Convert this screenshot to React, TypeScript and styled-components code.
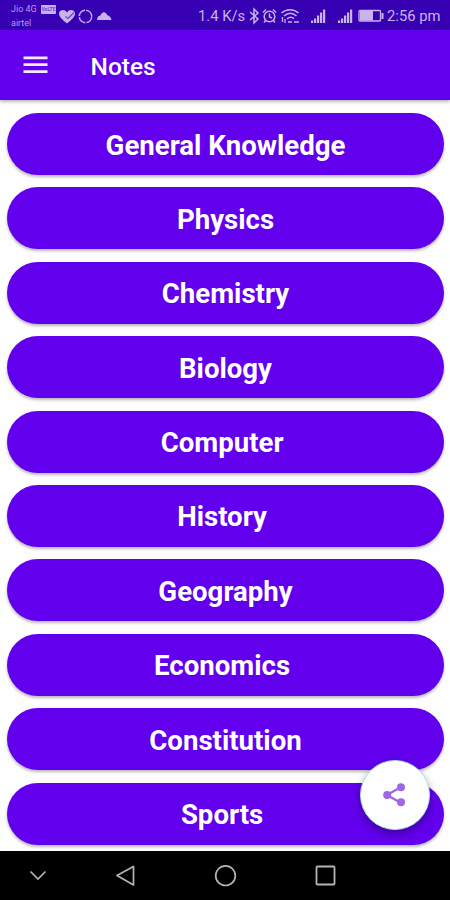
import React from "react";
import styled, { createGlobalStyle } from "styled-components";

const GlobalStyle = createGlobalStyle`
  * { box-sizing: border-box; }
  body { margin: 0; background: #fefefe; font-family: Roboto, "Liberation Sans", sans-serif; }
`;

const Screen = styled.div`
  position: relative;
  width: 450px;
  height: 900px;
  display: flex;
  flex-direction: column;
  overflow: hidden;
  background: #fefefe;
`;

const StatusBar = styled.header`
  height: 30px;
  flex: none;
  display: flex;
  justify-content: space-between;
  padding: 0 10px 0 11px;
  background: #3700b3;
  color: #c9b2ee;
`;

const StatusGroup = styled.div`
  display: flex;
  align-items: center;
  padding-top: 2px;
  svg { display: block; flex: none; }
`;

const Carrier = styled.div`
  font-size: 9px;
  line-height: 13.5px;
  width: 46px;
  color: #b69be6;
  margin-top: 1px;
`;

const CarrierLine = styled.div`
  display: flex;
  align-items: center;
  gap: 2px;
  height: 13.5px;
  white-space: nowrap;
`;

const CarrierName = styled.span<{ $width: number }>`
  width: ${(p) => p.$width}px;
`;

const VolteTag = styled.span`
  flex: none;
  width: 15px;
  height: 9px;
  border-radius: 1px;
  background: #c9b2ee;
  color: #6a45c4;
  font-size: 5px;
  line-height: 9px;
  text-align: center;
  font-weight: 700;
`;

const StatusText = styled.span<{ $width: number }>`
  flex: none;
  font-size: 14.8px;
  line-height: 28px;
  white-space: nowrap;
  width: ${(p) => p.$width}px;
`;

const SignalSlots = styled.div`
  flex: none;
  display: flex;
  gap: 11px;
  padding: 0 5px 0 7px;
`;

const AppBar = styled.div`
  position: relative;
  height: 70px;
  flex: none;
  display: flex;
  align-items: center;
  padding-left: 23px;
  background: #6200ee;
  color: #fff;
  box-shadow: 0 1px 4px rgba(0, 0, 0, 0.4);
`;

const MenuButton = styled.button`
  width: 67.5px;
  height: 24px;
  padding: 0;
  border: 0;
  background: none;
  color: #f2e8ff;
  svg { display: block; }
`;

const Title = styled.h1`
  margin: 3px 0 0;
  font-size: 24.5px;
  line-height: 30px;
  font-weight: 500;
`;

const SubjectList = styled.main`
  flex: 1;
  min-height: 0;
  overflow: hidden;
  display: flex;
  flex-direction: column;
  gap: 12.4px;
  padding: 13px 6px 0 7px;
`;

const SubjectButton = styled.button`
  height: 62px;
  flex: none;
  padding: 3px 0 0;
  border: 0;
  border-radius: 31px;
  background: #6200ee;
  color: #fff;
  font: 700 27.6px/32px Roboto, "Liberation Sans", sans-serif;
  white-space: pre;
  box-shadow: 0 2px 3px rgba(0, 0, 0, 0.28);
`;

const ShareButton = styled.button`
  position: absolute;
  left: 360px;
  top: 760px;
  width: 70px;
  height: 70px;
  padding: 0 2px 0 0;
  display: grid;
  place-items: center;
  border: 1px solid #a5e3e6;
  border-radius: 50%;
  background: #fefefe;
  color: #9c68e8;
  box-shadow: 0 4px 8px rgba(0, 0, 0, 0.35);
  svg { display: block; }
`;

const NavBar = styled.nav`
  height: 49px;
  flex: none;
  display: flex;
  align-items: center;
  padding-left: 24px;
  background: #000;
  color: #b4b4b4;
`;

const NavButton = styled.button<{ $width: number }>`
  width: ${(p) => p.$width}px;
  height: 28px;
  padding: 0;
  border: 0;
  background: none;
  color: inherit;
  svg { display: block; }
`;

const subjects = [
  "General Knowledge",
  "Physics",
  "Chemistry",
  "Biology",
  "Computer ",
  "History ",
  "Geography",
  "Economics ",
  "Constitution",
  "Sports ",
];

const NotificationIcons = () => (
  <svg width="56" height="20" viewBox="0 0 56 20" fill="none">
    <path d="M10 17.500C5 13.500 2 10.500 2 7.500c0-4 6-5 8-1 2-4 8-3 8 1 0 3-3 6-8 10Z" fill="currentColor" />
    <path d="m8.500 10.500 2.500 2 6-6" stroke="#6840c2" strokeWidth="1.200" />
    <circle cx="28.500" cy="10.500" r="6.200" stroke="currentColor" strokeWidth="1.500" strokeDasharray="8.500 1.240" />
    <path d="M40 14c0-3 1.500-4.500 3.500-4.500 1.500-4.500 5.500-4 6.500-.500 2.500.5 4 2.500 4.500 5Z" fill="currentColor" />
  </svg>
);

const ConnectionIcons = () => (
  <svg width="55" height="20" viewBox="0 0 55 20" fill="none" stroke="currentColor" strokeWidth="1.500">
    <path d="m2 6 8 7-4 4V3l4 4-8 7" />
    <circle cx="21.500" cy="10.500" r="5.300" />
    <path d="M21.500 7.500V11l2.500 1M15 6.500l3-3M25 3.500l3 3M17.500 14.500l-1.500 2M25.500 14.500l1.500 2" />
    <path d="M33.500 7c5-4.500 12-4.500 17 0M36 10c4-3.500 8.500-3.500 12.500 0M39 12.800c2.500-2 5-2 7 0" />
    <path d="M34.500 11v5m2.500-3v4m3-1h4m2 0h5" strokeWidth="1.300" />
  </svg>
);

const SignalIcon = () => (
  <svg width="16" height="20" viewBox="0 0 16 20" fill="currentColor">
    <path d="M1 14.500h2.200v2.500H1zM4 12.500h2.200V17H4zM7 9.500h2.200V17H7zM10 6.500h2.200V17H10zM13 3.500h2.200V17H13z" />
  </svg>
);

const BatteryIcon = () => (
  <svg width="29" height="20" viewBox="0 0 29 20">
    <rect x="1" y="4.500" width="21.500" height="10.500" rx="1" fill="none" stroke="currentColor" strokeWidth="1.300" />
    <path d="M2 5h13v9.500H2zM23.500 7H25.500v6h-2z" fill="currentColor" />
  </svg>
);

export default function App() {
  return (
    <Screen>
      <GlobalStyle />
      <StatusBar>
        <StatusGroup>
          <Carrier>
            <CarrierLine>
              <CarrierName $width={28}>Jio 4G</CarrierName>
              <VolteTag>VoLTE</VolteTag>
            </CarrierLine>
            <CarrierLine>airtel</CarrierLine>
          </Carrier>
          <NotificationIcons />
        </StatusGroup>
        <StatusGroup>
          <StatusText $width={50}>1.4 K/s</StatusText>
          <ConnectionIcons />
          <SignalSlots>
            <SignalIcon />
            <SignalIcon />
          </SignalSlots>
          <BatteryIcon />
          <StatusText $width={53}>2:56 pm</StatusText>
        </StatusGroup>
      </StatusBar>
      <AppBar>
        <MenuButton aria-label="Menu">
          <svg width="25" height="24" viewBox="0 0 25 24" fill="currentColor">
            <path d="M.5 3.500h24v2.700H.5zM.5 10.300h24V13H.5zM.5 17.200h24v2.700H.5z" />
          </svg>
        </MenuButton>
        <Title>Notes</Title>
      </AppBar>
      <SubjectList>
        {subjects.map((name) => (
          <SubjectButton key={name}>{name}</SubjectButton>
        ))}
      </SubjectList>
      <NavBar>
        <NavButton $width={90} aria-label="Hide">
          <svg width="28" height="28" viewBox="0 0 28 28" fill="none" stroke="currentColor" strokeWidth="1.700">
            <path d="m6.500 9.500 7.500 7.500 7.500-7.500" />
          </svg>
        </NavButton>
        <NavButton $width={97} aria-label="Back">
          <svg width="28" height="28" viewBox="0 0 28 28" fill="none" stroke="currentColor" strokeWidth="1.700" strokeLinejoin="round">
            <path d="M19.500 4.500v18.500L3 13.500Z" />
          </svg>
        </NavButton>
        <NavButton $width={100} aria-label="Home">
          <svg width="28" height="28" viewBox="0 0 28 28" fill="none" stroke="currentColor" strokeWidth="1.700">
            <circle cx="14.500" cy="13.700" r="9.800" />
          </svg>
        </NavButton>
        <NavButton $width={28} aria-label="Recents">
          <svg width="28" height="28" viewBox="0 0 28 28" fill="none" stroke="currentColor" strokeWidth="1.800">
            <rect x="5.500" y="4.500" width="18" height="18" rx="1" />
          </svg>
        </NavButton>
      </NavBar>
      <ShareButton aria-label="Share">
        <svg width="26" height="26" viewBox="0 0 26 26" fill="currentColor">
          <path d="M20 5 6 13l14 8" fill="none" stroke="currentColor" strokeWidth="2.400" />
          <circle cx="20" cy="5.300" r="4" />
          <circle cx="6.200" cy="13" r="4" />
          <circle cx="20" cy="20.300" r="4" />
        </svg>
      </ShareButton>
    </Screen>
  );
}
